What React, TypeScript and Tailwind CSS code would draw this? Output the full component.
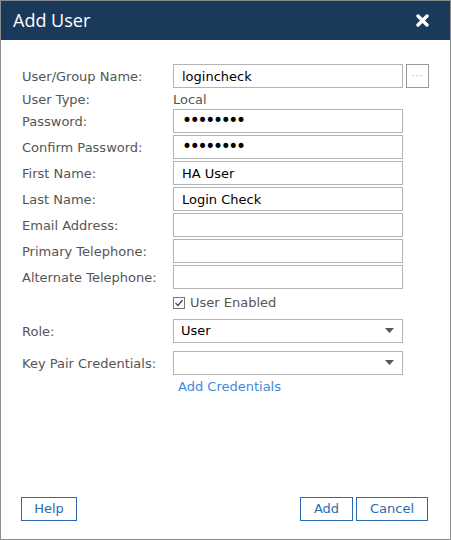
import { useState } from 'react';

const FIELDS: { label: string; value: string; type?: string }[] = [
    { label: 'Password:', value: 'password', type: 'password' },
    { label: 'Confirm Password:', value: 'password', type: 'password' },
    { label: 'First Name:', value: 'HA User' },
    { label: 'Last Name:', value: 'Login Check' },
    { label: 'Email Address:', value: '' },
    { label: 'Primary Telephone:', value: '' },
    { label: 'Alternate Telephone:', value: '' },
];

const font = { fontFamily: '"DejaVu Sans", Verdana, sans-serif' };

export default function App() {
    const [enabled, setEnabled] = useState(true);

    return (
        <div className="flex h-[540px] w-[451px] flex-col border border-[#8c8c8c] bg-white" style={font}>
            <div className="flex h-[39px] shrink-0 items-center justify-between bg-[#1a3a5c] pl-3 pr-[20px]">
                <h1 className="text-[18px] text-white" style={{ fontFamily: '"Open Sans", sans-serif' }}>Add User</h1>
                <button type="button" aria-label="Close" className="flex h-4 w-4 items-center justify-center">
                    <svg width="13" height="13" viewBox="0 0 13 13">
                        <path d="M2 2 L11 11 M11 2 L2 11" stroke="white" strokeWidth="3.4" strokeLinecap="round" />
                    </svg>
                </button>
            </div>

            <div className="flex flex-1 flex-col pl-[21px] pr-[21px] pt-[24px] pb-[18px] text-[13px]">
                <Row label="User/Group Name:">
                    <div className="flex gap-[3px]">
                        <TextBox value="logincheck" />
                        <button type="button" className="flex h-[24px] w-[23px] items-center justify-center border border-[#9a9a9a] bg-white">
                            <span className="text-[9px] leading-none tracking-[1px] text-[#8aa0b8]">···</span>
                        </button>
                    </div>
                </Row>
                <div className="flex h-[21px] items-center pt-[2px]">
                    <span className="w-[151px] text-[#555]">User Type:</span>
                    <span className="text-[#555]">Local</span>
                </div>

                <div className="flex flex-col gap-[2px]">
                    {FIELDS.map((f) => (
                        <Row key={f.label} label={f.label}>
                            <TextBox value={f.value} type={f.type} />
                        </Row>
                    ))}
                </div>

                <label className="mt-[4px] flex h-[19px] items-center gap-[5px] pl-[151px] text-[#555]">
                    <button
                        type="button"
                        role="checkbox"
                        aria-checked={enabled}
                        onClick={() => setEnabled(!enabled)}
                        className="flex h-[12px] w-[12px] items-center justify-center border border-[#777] bg-white"
                    >
                        {enabled && (
                            <svg width="10" height="10" viewBox="0 0 10 10">
                                <path d="M1.5 5 L4 7.5 L8.5 2" fill="none" stroke="#444" strokeWidth="1.2" />
                            </svg>
                        )}
                    </button>
                    User Enabled
                </label>

                <div className="mt-[7px] flex flex-col gap-[8px]">
                    <Row label="Role:">
                        <Select value="User" />
                    </Row>
                    <Row label="Key Pair Credentials:">
                        <Select value="" />
                    </Row>
                </div>
                <a href="#" className="mt-[2px] block pl-[156px] text-[#3f8ae0]">Add Credentials</a>

                <div className="-ml-px mr-px mt-auto flex items-center">
                    <FooterButton className="w-[56px]">Help</FooterButton>
                    <div className="ml-auto flex gap-[3px]">
                        <FooterButton className="w-[53px]">Add</FooterButton>
                        <FooterButton className="w-[72px]">Cancel</FooterButton>
                    </div>
                </div>
            </div>
        </div>
    );
}

function Row({ label, children }: { label: string; children: React.ReactNode }) {
    return (
        <div className="flex h-[24px] items-center">
            <span className="w-[151px] shrink-0 pt-px text-[#555]">{label}</span>
            {children}
        </div>
    );
}

function TextBox({ value, type = 'text' }: { value: string; type?: string }) {
    const secret = type === 'password';
    return (
        <input
            readOnly
            type={type}
            value={value}
            className={`h-[24px] w-[230px] border border-[#b3b3b3] bg-white px-[8px] text-black outline-none ${secret ? 'text-[17px] tracking-[-2.3px]' : 'text-[13px]'}`}
            style={font}
        />
    );
}

function Select({ value }: { value: string }) {
    return (
        <div className="flex h-[24px] w-[230px] items-center justify-between border border-[#b3b3b3] bg-white pl-[7px] pr-[8px] text-[13px] text-black">
            <span>{value}</span>
            <svg width="9" height="6" viewBox="0 0 9 6">
                <path d="M0 0 H9 L4.5 5 Z" fill="#555" />
            </svg>
        </div>
    );
}

function FooterButton({ className, children }: { className: string; children: React.ReactNode }) {
    return (
        <button type="button" className={`h-[24px] border border-[#2c6ab0] bg-white text-[13px] text-[#2c6ab0] ${className}`}>
            {children}
        </button>
    );
}
